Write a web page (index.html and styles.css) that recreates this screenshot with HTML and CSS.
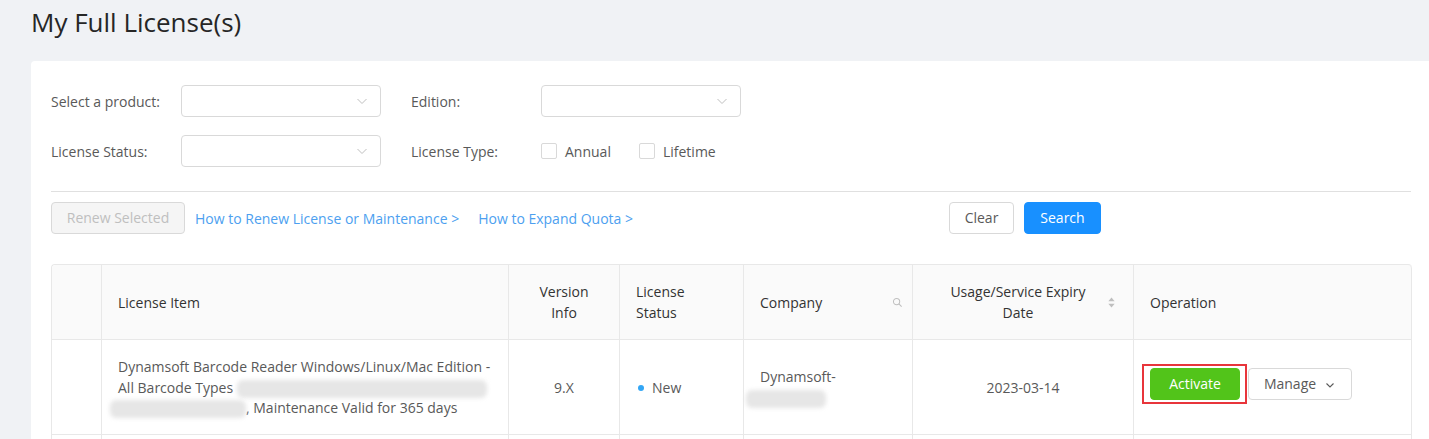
FILE: index.html
```html
<!DOCTYPE html>
<html lang="en">
<head>
<meta charset="utf-8">
<title>My Full License(s)</title>
<link rel="stylesheet" href="styles.css">
</head>
<body>
<div class="page">
  <h1 class="title">My Full License(s)</h1>
  <div class="card">
    <div class="filters">
      <div class="frow">
        <label class="flabel">Select a product:</label>
        <div class="select"><svg class="chev" viewBox="0 0 12 12"><path d="M1.5 4 L6 8.5 L10.5 4" fill="none" stroke="#bfbfbf" stroke-width="1"/></svg></div>
        <label class="flabel gap">Edition:</label>
        <div class="select"><svg class="chev" viewBox="0 0 12 12"><path d="M1.5 4 L6 8.5 L10.5 4" fill="none" stroke="#bfbfbf" stroke-width="1"/></svg></div>
      </div>
      <div class="frow">
        <label class="flabel">License Status:</label>
        <div class="select"><svg class="chev" viewBox="0 0 12 12"><path d="M1.5 4 L6 8.5 L10.5 4" fill="none" stroke="#bfbfbf" stroke-width="1"/></svg></div>
        <label class="flabel gap">License Type:</label>
        <div class="checks">
          <span class="check"><span class="box"></span><span class="ctext">Annual</span></span>
          <span class="check"><span class="box"></span><span class="ctext">Lifetime</span></span>
        </div>
      </div>
    </div>
    <div class="divider"></div>
    <div class="actions">
      <div class="left">
        <button class="btn disabled">Renew Selected</button>
        <a class="link">How to Renew License or Maintenance &gt;</a>
        <a class="link">How to Expand Quota &gt;</a>
      </div>
      <button class="btn clear">Clear</button>
      <button class="btn primary">Search</button>
    </div>
    <table class="grid">
      <colgroup>
        <col class="c0"><col class="c1"><col class="c2"><col class="c3"><col class="c4"><col class="c5"><col class="c6">
      </colgroup>
      <thead>
        <tr>
          <th></th>
          <th>License Item</th>
          <th class="center">Version<br>Info</th>
          <th>License<br>Status</th>
          <th><div class="thflex"><span>Company</span><svg class="hicon" viewBox="0 0 12 12"><circle cx="5" cy="5" r="3.4" fill="none" stroke="#bfbfbf" stroke-width="1.1"/><path d="M7.5 7.5 L10.5 10.5" stroke="#bfbfbf" stroke-width="1.2"/></svg></div></th>
          <th class="center"><div class="thflex"><span class="grow">Usage/Service Expiry<br>Date</span><svg class="sorter" viewBox="0 0 10 14"><path d="M5 1.5 L8.5 5.5 L1.5 5.5 Z" fill="#bfbfbf"/><path d="M5 12.5 L8.5 8.5 L1.5 8.5 Z" fill="#bfbfbf"/></svg></div></th>
          <th>Operation</th>
        </tr>
      </thead>
      <tbody>
        <tr>
          <td></td>
          <td>Dynamsoft Barcode Reader Windows/Linux/Mac Edition -<br>All Barcode Types <span class="blur b1"></span><br><span class="blur b2"></span>, Maintenance Valid for 365 days</td>
          <td class="center">9.X</td>
          <td><span class="dot"></span>New</td>
          <td class="company">Dynamsoft-<br><span class="blur b3"></span></td>
          <td class="center">2023-03-14</td>
          <td>
            <div class="ops">
              <button class="btn success">Activate</button>
              <button class="btn manage">Manage <svg class="mchev" viewBox="0 0 12 12"><path d="M2.5 4.5 L6 8 L9.5 4.5" fill="none" stroke="#595959" stroke-width="1.1"/></svg></button>
              <span class="mark"></span>
            </div>
          </td>
        </tr>
        <tr>
          <td></td><td>&nbsp;</td><td></td><td></td><td></td><td></td><td></td>
        </tr>
      </tbody>
    </table>
  </div>
</div>
</body>
</html>
```

FILE: styles.css
```css
html, body {
  margin: 0;
  padding: 0;
  background: #f0f2f5;
  overflow: hidden;
}
body {
  font-family: "Open Sans", "Liberation Sans", sans-serif;
  font-size: 14px;
  color: #595959;
}
.page {
  padding: 5px 0 0 31px;
}
.title {
  margin: 0;
  font-size: 26px;
  font-weight: 400;
  line-height: 35px;
  color: #262626;
  height: 56px;
}
.card {
  background: #fff;
  border-radius: 4px 0 0 0;
  padding: 24px 18px 40px 20px;
}
.filters {
  display: flex;
  flex-direction: column;
  gap: 18px;
}
.frow {
  display: flex;
  align-items: center;
  height: 32px;
}
.flabel {
  width: 130px;
  flex: 0 0 130px;
  color: #595959;
}
.flabel.gap {
  margin-left: 30px;
}
.select {
  width: 200px;
  height: 32px;
  box-sizing: border-box;
  border: 1px solid #d9d9d9;
  border-radius: 4px;
  display: flex;
  align-items: center;
  justify-content: flex-end;
  padding-right: 12px;
}
.chev {
  width: 12px;
  height: 12px;
}
.checks {
  display: flex;
  align-items: center;
}
.check {
  display: flex;
  align-items: center;
  margin-right: 28px;
}
.box {
  width: 16px;
  height: 16px;
  box-sizing: border-box;
  border: 1px solid #d9d9d9;
  border-radius: 2px;
  margin-right: 8px;
}
.ctext {
  color: #595959;
}
.divider {
  height: 1px;
  background: #e0e0e0;
  margin: 24px 0 10px;
}
.actions {
  display: flex;
  align-items: center;
  gap: 10px;
  height: 32px;
  margin-bottom: 30px;
}
.left {
  flex: 0 0 888px;
  display: flex;
  align-items: center;
}
.btn {
  font-family: inherit;
  font-size: 14px;
  height: 32px;
  box-sizing: border-box;
  padding: 0 15px;
  border: 1px solid #d9d9d9;
  border-radius: 4px;
  background: #fff;
  color: #595959;
  line-height: 30px;
  cursor: pointer;
}
.btn.disabled {
  background: #f5f5f5;
  color: #bfbfbf;
  width: 134px;
  padding: 0;
  margin-right: 10px;
}
.link {
  color: #4d9ff0;
  margin-right: 19px;
}
.btn.clear {
  width: 65px;
  padding: 0;
}
.btn.primary {
  background: #1890ff;
  border-color: #1890ff;
  color: #fff;
  width: 77px;
  padding: 0;
}
.grid {
  width: 1360px;
  table-layout: fixed;
  border-collapse: separate;
  border-spacing: 0;
  border-top: 1px solid #e8e8e8;
  border-left: 1px solid #e8e8e8;
  border-radius: 4px 4px 0 0;
}
.c0 { width: 50px; }
.c1 { width: 407px; }
.c2 { width: 111px; }
.c3 { width: 124px; }
.c4 { width: 169px; }
.c5 { width: 221px; }
.c6 { width: 278px; }
.grid th, .grid td {
  border-right: 1px solid #e8e8e8;
  border-bottom: 1px solid #e8e8e8;
  padding: 16px;
  text-align: left;
  vertical-align: middle;
  line-height: 21px;
}
.grid th {
  background: #fafafa;
  font-weight: 400;
  color: #333;
  line-height: 21px;
}
.grid thead th:first-child {
  border-top-left-radius: 4px;
}
.grid thead th:last-child {
  border-top-right-radius: 4px;
}
.grid td {
  padding: 17px 16px 15px;
  line-height: 20.5px;
  color: #595959;
}
.grid .center {
  text-align: center;
}
.thflex {
  display: flex;
  align-items: center;
  justify-content: space-between;
}
.grow {
  flex: 1;
  text-align: center;
}
.hicon {
  width: 11px;
  height: 11px;
  margin-right: -7px;
}
.sorter {
  width: 9px;
  height: 13px;
  margin-right: 1px;
}
.company {
  padding-left: 17px;
}
.dot {
  display: inline-block;
  width: 6px;
  height: 6px;
  border-radius: 50%;
  background: #33a6f5;
  vertical-align: middle;
  margin: 0 8px 2px 2px;
}
.blur {
  display: inline-block;
  height: 18px;
  vertical-align: middle;
  background: #e6e6e6;
  filter: blur(2px);
  border-radius: 6px;
}
.b1 { width: 250px; }
.b2 { width: 136px; margin-left: -8px; }
.b3 { width: 80px; margin-left: -14px; }
.ops {
  position: relative;
  display: flex;
  align-items: center;
  gap: 8px;
  margin-bottom: 8px;
}
.btn.success {
  background: #52c41a;
  border-color: #52c41a;
  color: #fff;
  width: 90px;
  padding: 0;
}
.btn.manage {
  width: 104px;
  padding: 0;
  display: flex;
  align-items: center;
  justify-content: center;
  gap: 8px;
}
.mchev {
  width: 12px;
  height: 12px;
  margin-top: 3px;
}
.mark {
  position: absolute;
  left: -8px;
  top: -4px;
  width: 105px;
  height: 40px;
  box-sizing: border-box;
  border: 2px solid #e8353b;
}
```
